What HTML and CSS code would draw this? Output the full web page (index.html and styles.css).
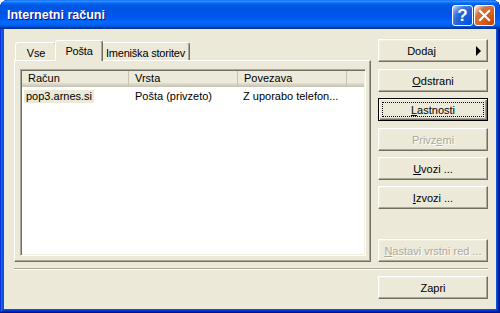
FILE: index.html
```html
<!DOCTYPE html>
<html lang="sl">
<head>
    <meta charset="UTF-8">
    <title>Internetni računi</title>
    <link rel="stylesheet" href="styles.css">
</head>
<body>
    <div class="window">
        <div class="titlebar">
            <span class="title">Internetni računi</span>
            <div class="caption-buttons">
                <button class="cap-btn help">?</button>
                <button class="cap-btn close">
                    <svg width="19" height="19" viewBox="0 0 19 19">
                        <path d="M5 5 L14 14 M14 5 L5 14" stroke="#fff" stroke-width="2.2" stroke-linecap="square"/>
                    </svg>
                </button>
            </div>
        </div>

        <div class="client">
            <div class="main">
                <div class="tabs-area">
                    <div class="tab-strip">
                        <div class="tab tab-vse">Vse</div>
                        <div class="tab tab-posta active">Pošta</div>
                        <div class="tab tab-imen">Imeniška storitev</div>
                    </div>
                    <div class="tab-pane">
                        <div class="list">
                            <div class="list-header">
                                <div class="col c1">Račun</div>
                                <div class="col c2">Vrsta</div>
                                <div class="col c3">Povezava</div>
                                <div class="col c4"></div>
                            </div>
                            <div class="list-body">
                                <div class="row">
                                    <div class="cell c1"><span class="selected">pop3.arnes.si</span></div>
                                    <div class="cell c2">Pošta (privzeto)</div>
                                    <div class="cell c3">Z uporabo telefon...</div>
                                </div>
                            </div>
                        </div>
                    </div>
                </div>

                <div class="side-buttons">
                    <button class="btn btn-menu"><span class="label">Doda<u>j</u></span><span class="arrow"></span></button>
                    <button class="btn btn-remove"><u>O</u>dstrani</button>
                    <button class="btn btn-props focused"><u>L</u>astnosti</button>
                    <button class="btn btn-default disabled">Privz<u>e</u>mi</button>
                    <button class="btn btn-import"><u>U</u>vozi ...</button>
                    <button class="btn btn-export"><u>I</u>zvozi ...</button>
                    <button class="btn btn-order disabled"><u>N</u>astavi vrstni red ...</button>
                </div>
            </div>

            <div class="separator"></div>

            <div class="footer">
                <button class="btn">Zapri</button>
            </div>
        </div>
    </div>
</body>
</html>
```

FILE: styles.css
```css
body {
    margin: 0;
    background: #fff;
    font-family: "Liberation Sans", Arial, sans-serif;
    font-size: 11px;
    color: #000;
}

.window {
    width: 500px;
    height: 313px;
    display: flex;
    flex-direction: column;
    background: #0855dd;
    border-radius: 8px 8px 0 0;
    overflow: hidden;
    box-shadow: inset -1px -1px #00138c, inset 1px 1px #0831d9,
        inset -2px -2px #001ea0, inset 2px 2px #166aee,
        inset -3px -3px #003bda, inset 3px 3px #0855dd;
}

/* title bar */
.titlebar {
    height: 29px;
    flex: none;
    display: flex;
    align-items: flex-start;
    padding: 0 5px 0 7px;
    box-sizing: border-box;
    background: linear-gradient(to bottom, #0058ee 0%, #3a93ff 3%, #288eff 6%, #127dff 8%,
        #036ffc 10%, #0262ee 14%, #0057e5 20%, #0054e3 24%, #0055eb 56%, #005bf5 66%,
        #026afe 76%, #0062ef 86%, #0052d6 92%, #0040ab 94%, #003092 100%);
}

.title {
    line-height: 27px;
    padding-top: 2px;
    color: #fff;
    font-weight: bold;
    font-size: 12.5px;
    text-shadow: 1px 1px #0f1089;
}

.caption-buttons {
    margin-left: auto;
    display: flex;
    gap: 1px;
    padding-top: 5px;
}

.cap-btn {
    width: 21px;
    height: 21px;
    padding: 0;
    border: 1px solid #fff;
    border-radius: 3px;
    display: flex;
    align-items: center;
    justify-content: center;
}

.help {
    background: radial-gradient(circle at 90% 90%, #0054e9 0%, #2263d5 55%, #4479e4 70%, #a3bbec 90%, #fff 100%);
    color: #fff;
    font-family: "Liberation Sans", Arial, sans-serif;
    font-weight: bold;
    font-size: 17px;
    line-height: 19px;
}

.close {
    background: radial-gradient(circle at 90% 90%, #cc4600 0%, #dc6527 55%, #cd7546 70%, #ffccb2 90%, #fff 100%);
}

/* client area */
.client {
    flex: 1;
    margin: 0 4px 4px;
    padding: 10px 8px 0 10px;
    background: #ece9d8;
    display: flex;
    flex-direction: column;
}

.main {
    display: flex;
    gap: 7px;
    height: 223px;
}

.tabs-area {
    width: 357px;
    display: flex;
    flex-direction: column;
}

.tab-strip {
    height: 21px;
    display: flex;
    align-items: flex-end;
    padding-left: 1px;
}

.tab {
    height: 18px;
    box-sizing: border-box;
    padding-top: 4px;
    line-height: 13px;
    text-align: center;
    letter-spacing: -0.2px;
    background: #ece9d8;
    border: 1px solid;
    border-bottom: none;
    border-color: #fff #716f64 transparent #fff;
    border-radius: 3px 3px 0 0;
    box-shadow: inset -1px 0 #aca899;
    white-space: nowrap;
}

.tab-vse { width: 42px; }
.tab-posta { width: 44px; }
.tab-imen { width: 89px; }

.tab.active {
    width: 48px;
    height: 21px;
    margin: 0 -2px -1px;
    position: relative;
    z-index: 1;
}

.tab-pane {
    height: 202px;
    box-sizing: border-box;
    border: 1px solid;
    border-color: #fff #716f64 #716f64 #fff;
    box-shadow: inset -1px -1px #aca899;
    padding: 8px 4px 5px 5px;
}

/* list view */
.list {
    width: 346px;
    height: 187px;
    box-sizing: border-box;
    padding: 1px;
    background: #fff;
    border: 1px solid;
    border-color: #aca899 #fff #fff #aca899;
    box-shadow: inset 1px 1px #716f64, inset -1px -1px #f1efe2;
}

.list-header {
    display: flex;
    height: 16px;
    background: linear-gradient(to bottom, #ebeadb 0, #ebeadb 12px, #e2decd 12px, #d6d2c2 14px, #cbc7b8 15px);
}

.col {
    line-height: 15px;
    padding-left: 6px;
    box-sizing: border-box;
    border-right: 1px solid #c7c5b2;
    white-space: nowrap;
}

.col.c1, .cell.c1 { width: 107px; }
.col.c2, .cell.c2 { width: 109px; }
.col.c3, .cell.c3 { width: 109px; }
.col.c4 { flex: 1; border-right: none; }

.list-body {
    padding-top: 3px;
}

.row {
    display: flex;
    line-height: 13px;
}

.cell {
    box-sizing: border-box;
    white-space: nowrap;
    overflow: hidden;
}

.cell.c1 { padding-left: 2px; }
.cell.c2 { padding-left: 6px; }
.cell.c3 { padding-left: 5px; }

.selected {
    display: inline-block;
    padding: 0 2px;
    background: #ece9d8;
}

/* buttons */
.side-buttons {
    width: 110px;
    display: flex;
    flex-direction: column;
}

.btn {
    width: 110px;
    height: 23px;
    box-sizing: border-box;
    padding: 2px 0 0;
    display: flex;
    align-items: center;
    justify-content: center;
    background: #ece9d8;
    border: 1px solid;
    border-color: #fff #716f64 #716f64 #fff;
    box-shadow: inset -1px -1px #aca899, inset 1px 1px #f1efe2;
    font-family: inherit;
    font-size: 11px;
    color: #000;
    line-height: 13px;
    white-space: nowrap;
}

.btn-menu { margin-bottom: 7px; }
.btn-remove { margin-bottom: 6px; }
.btn-props { margin-bottom: 7px; }
.btn-default { margin-bottom: 6px; }
.btn-import { margin-bottom: 6px; }
.btn-order { margin-top: auto; }

.btn-menu .label {
    flex: 1;
    text-align: center;
    padding-left: 2px;
}

.arrow {
    width: 0;
    height: 0;
    border-left: 5px solid #000;
    border-top: 5px solid transparent;
    border-bottom: 5px solid transparent;
    margin: -2px 6px 0 14px;
}

.btn.focused {
    border-color: #000;
    box-shadow: inset 1px 1px #fff, inset -1px -1px #716f64, inset -2px -2px #aca899;
    outline: 1px dotted #000;
    outline-offset: -5px;
}

.btn.disabled {
    color: #aca899;
    text-shadow: 1px 1px #fff;
}

.separator {
    margin-top: 6px;
    height: 0;
    border-top: 1px solid #aca899;
    border-bottom: 1px solid #fff;
}

.footer {
    margin-top: 6px;
    display: flex;
    justify-content: flex-end;
}
```
